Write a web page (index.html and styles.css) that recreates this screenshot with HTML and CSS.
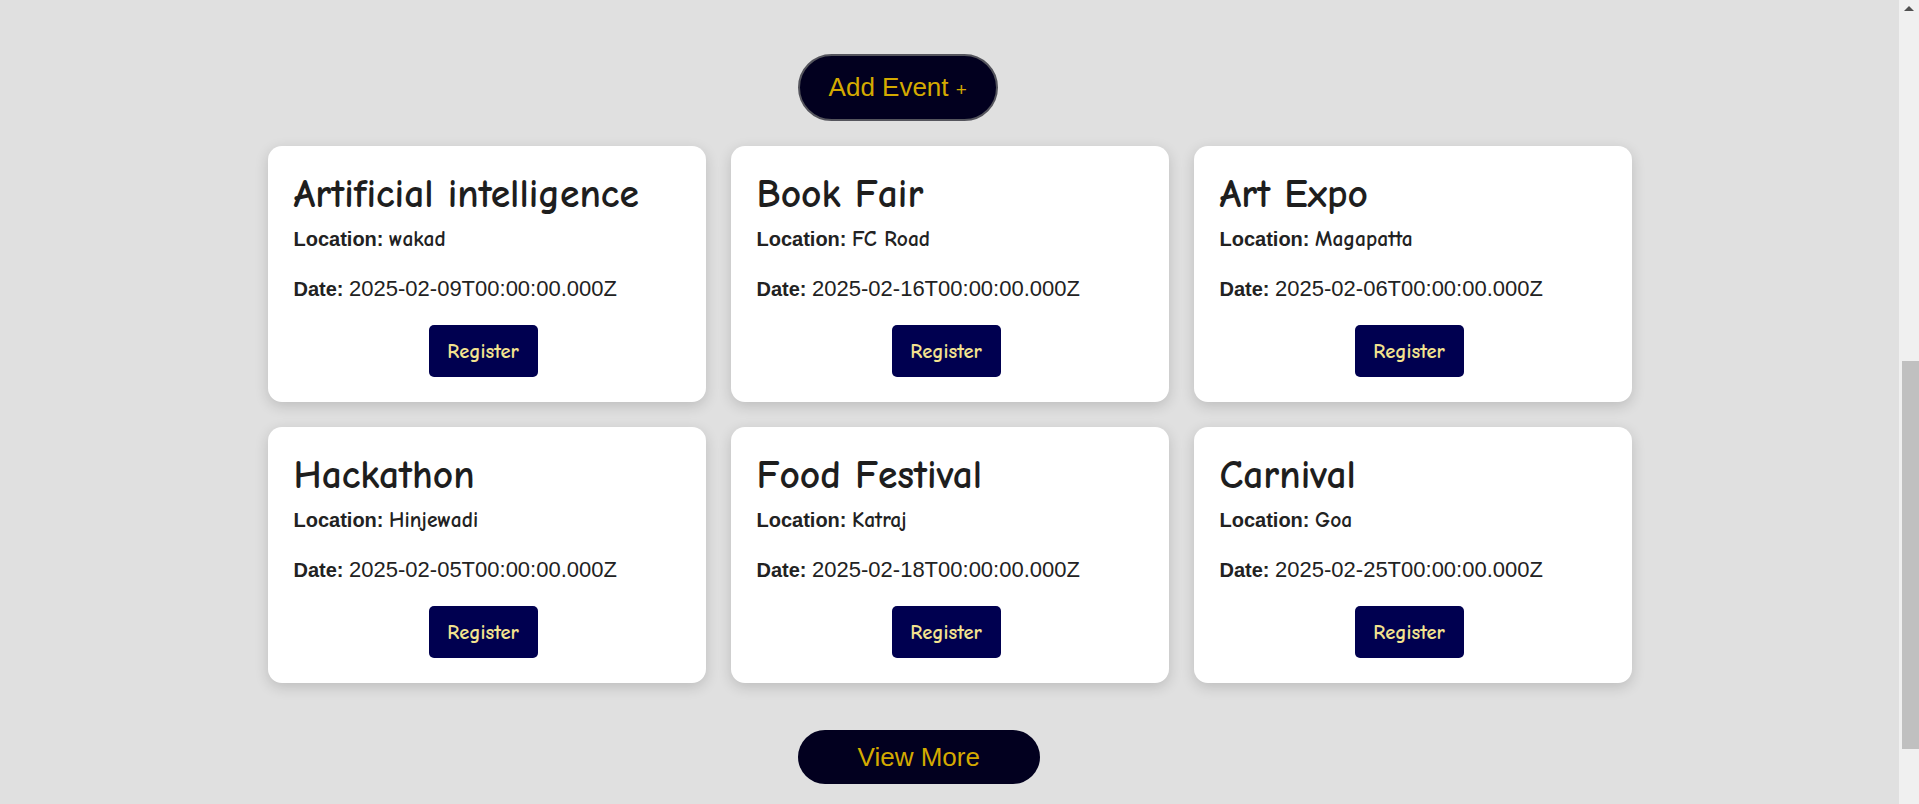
FILE: index.html
```html
<!DOCTYPE html>
<html lang="en">
<head>
<meta charset="utf-8">
<title>Events</title>
<link rel="stylesheet" href="styles.css">
</head>
<body>
<main class="events">
  <button class="add-btn">Add Event <span class="plus">+</span></button>
  <section class="grid">
    <article class="card">
      <h2 class="card-title">Artificial intelligence</h2>
      <p class="line"><strong>Location:</strong> <span class="loc">wakad</span></p>
      <p class="line"><strong>Date:</strong> <span class="date">2025-02-09T00:00:00.000Z</span></p>
      <button class="reg-btn">Register</button>
    </article>
    <article class="card">
      <h2 class="card-title">Book Fair</h2>
      <p class="line"><strong>Location:</strong> <span class="loc">FC Road</span></p>
      <p class="line"><strong>Date:</strong> <span class="date">2025-02-16T00:00:00.000Z</span></p>
      <button class="reg-btn">Register</button>
    </article>
    <article class="card">
      <h2 class="card-title">Art Expo</h2>
      <p class="line"><strong>Location:</strong> <span class="loc">Magapatta</span></p>
      <p class="line"><strong>Date:</strong> <span class="date">2025-02-06T00:00:00.000Z</span></p>
      <button class="reg-btn">Register</button>
    </article>
    <article class="card">
      <h2 class="card-title">Hackathon</h2>
      <p class="line"><strong>Location:</strong> <span class="loc">Hinjewadi</span></p>
      <p class="line"><strong>Date:</strong> <span class="date">2025-02-05T00:00:00.000Z</span></p>
      <button class="reg-btn">Register</button>
    </article>
    <article class="card">
      <h2 class="card-title">Food Festival</h2>
      <p class="line"><strong>Location:</strong> <span class="loc">Katraj</span></p>
      <p class="line"><strong>Date:</strong> <span class="date">2025-02-18T00:00:00.000Z</span></p>
      <button class="reg-btn">Register</button>
    </article>
    <article class="card">
      <h2 class="card-title">Carnival</h2>
      <p class="line"><strong>Location:</strong> <span class="loc">Goa</span></p>
      <p class="line"><strong>Date:</strong> <span class="date">2025-02-25T00:00:00.000Z</span></p>
      <button class="reg-btn">Register</button>
    </article>
  </section>
  <button class="more-btn">View More</button>
</main>
<aside class="scrollbar" aria-hidden="true">
  <div class="scroll-arrow"></div>
  <div class="scroll-thumb"></div>
</aside>
</body>
</html>
```

FILE: styles.css
```css
html {
  height: 100%;
}

body {
  margin: 0;
  height: 100%;
  background: #e0e0e0;
  font-family: "Liberation Sans", Arial, sans-serif;
  color: #222;
  display: flex;
  overflow: hidden;
}

.events {
  flex: 1;
  min-width: 0;
  display: flex;
  flex-direction: column;
  padding: 54px 0 20px;
}

/* browser scrollbar gutter */
.scrollbar {
  width: 20px;
  flex: none;
  background: #f0f0f0;
  display: flex;
  flex-direction: column;
  align-items: center;
}

.scroll-arrow {
  margin-top: 6px;
  width: 0;
  height: 0;
  border-left: 5px solid transparent;
  border-right: 5px solid transparent;
  border-bottom: 5px solid #505050;
}

.scroll-thumb {
  margin-top: 350px;
  margin-left: 3px;
  width: 17px;
  height: 388px;
  background: #c0c0c0;
}

.add-btn,
.more-btn {
  align-self: flex-start;
  margin-left: 42%;
  background: #02001f;
  color: #d4aa00;
  font-family: "Liberation Sans", Arial, sans-serif;
  font-size: 26px;
  border-radius: 40px;
  cursor: pointer;
}

.add-btn {
  height: 67px;
  padding: 0 29px;
  border: 2px solid #55555d;
  margin-bottom: 25px;
}

.plus {
  font-size: 19px;
}

.more-btn {
  height: 54px;
  padding: 0 60px;
  border: none;
  margin-top: 47px;
}

.grid {
  width: 1364px;
  margin: 0 auto;
  display: grid;
  grid-template-columns: repeat(3, 1fr);
  gap: 25px;
}

.card {
  background: #fff;
  border-radius: 14px;
  box-shadow: 0 4px 14px rgba(0, 0, 0, 0.16);
  padding: 26px 33px 25px 26px;
  height: 256px;
  box-sizing: border-box;
  display: flex;
  flex-direction: column;
}

.card-title {
  margin: 0 0 8px;
  font-family: "Comic Sans MS", "Comic Neue", "DejaVu Sans", sans-serif;
  font-weight: bold;
  font-size: 39.5px;
  line-height: 44px;
  color: #1e1e1e;
  white-space: nowrap;
}

.line {
  margin: 0 0 20px;
  font-size: 20px;
  line-height: 30px;
  color: #222;
}

.line + .line {
  margin-bottom: 21px;
}

.line strong {
  font-weight: bold;
}

.loc {
  font-family: "Comic Sans MS", "Comic Neue", "DejaVu Sans", sans-serif;
  font-weight: bold;
  font-size: 21.5px;
}

.date {
  font-size: 22px;
}

.reg-btn {
  align-self: center;
  width: 109px;
  height: 52px;
  padding: 0;
  border: none;
  border-radius: 5px;
  background: #000050;
  color: #f3e38f;
  font-family: "Comic Sans MS", "Comic Neue", "DejaVu Sans", sans-serif;
  font-weight: bold;
  font-size: 20.5px;
  cursor: pointer;
}
```
